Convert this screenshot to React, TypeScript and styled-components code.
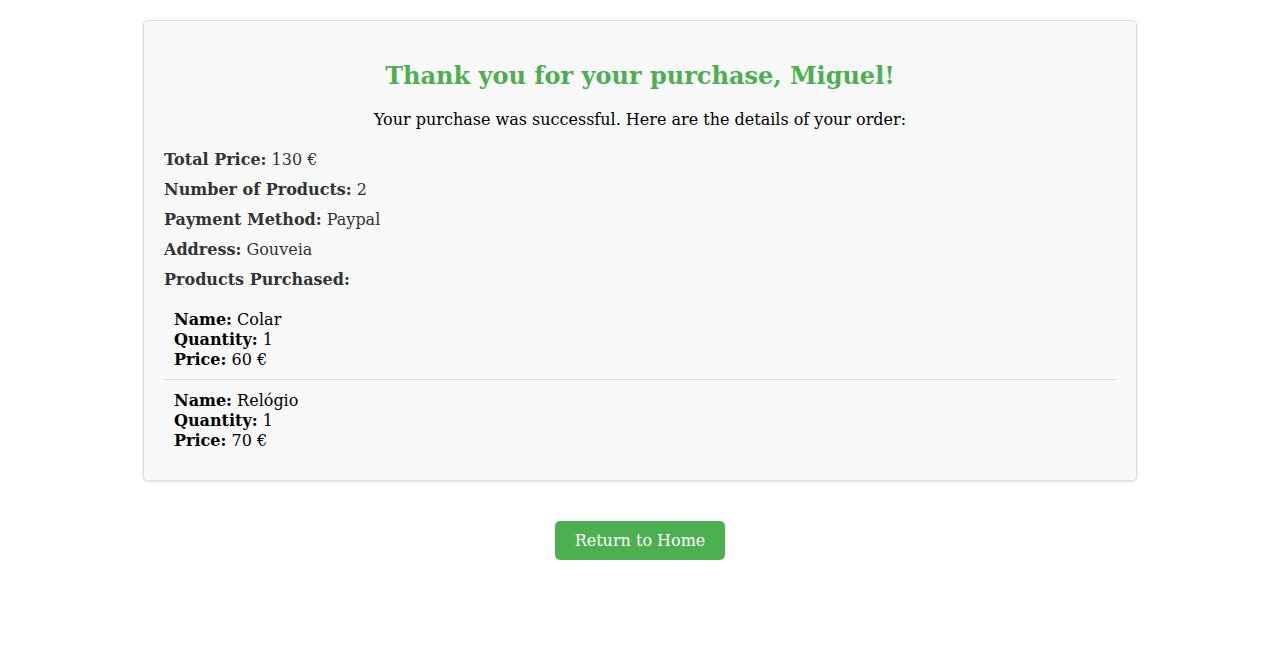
import React from "react";
import styled, { createGlobalStyle } from "styled-components";

const GlobalStyle = createGlobalStyle`
  html, body { margin: 0; padding: 0; background: #ffffff; }
  body { font-family: "DejaVu Serif", serif; font-size: 16px; line-height: 20px; color: #000; }
`;

const Page = styled.main`
  display: flex;
  flex-direction: column;
  align-items: center;
  padding: 20px 0 40px 15px;
`;

const Card = styled.section`
  box-sizing: border-box;
  width: 994px;
  padding: 20px;
  background: #f9f9f9;
  border: 1px solid #dddddd;
  border-radius: 5px;
  box-shadow: 0 1px 3px rgba(0, 0, 0, 0.12);
`;

const Title = styled.h2`
  margin: 21px 0 20px;
  font-size: 24px;
  line-height: 28px;
  font-weight: bold;
  color: #4caf50;
  text-align: center;
`;

const Subtitle = styled.p`
  margin: 0 0 20px;
  text-align: center;
`;

const InfoRow = styled.p`
  margin: 0 0 10px;
  color: #333333;
`;

const ProductList = styled.ul`
  list-style: none;
  margin: 20px 0 0;
  padding: 0;
`;

const ProductItem = styled.li`
  padding: 0 10px 9px;
  border-bottom: 1px solid #dddddd;
  & + & {
    padding-top: 11px;
  }
  &:last-child {
    border-bottom: none;
  }
`;

const Line = styled.div``;

const HomeButton = styled.button`
  margin-top: 40px;
  padding: 10px 20px;
  font-family: "DejaVu Serif", serif;
  font-size: 16px;
  line-height: 19px;
  color: #ffffff;
  background: #4caf50;
  border: none;
  border-radius: 5px;
  cursor: pointer;
`;

const products = [
  { name: "Colar", quantity: 1, price: 60 },
  { name: "Relógio", quantity: 1, price: 70 },
];

const info: [string, string][] = [
  ["Total Price:", "130 €"],
  ["Number of Products:", "2"],
  ["Payment Method:", "Paypal"],
  ["Address:", "Gouveia"],
];

export default function App() {
  return (
    <>
      <GlobalStyle />
      <Page>
        <Card>
          <Title>Thank you for your purchase, Miguel!</Title>
          <Subtitle>Your purchase was successful. Here are the details of your order:</Subtitle>
          {info.map(([label, value]) => (
            <InfoRow key={label}>
              <strong>{label}</strong> {value}
            </InfoRow>
          ))}
          <InfoRow>
            <strong>Products Purchased:</strong>
          </InfoRow>
          <ProductList>
            {products.map((p) => (
              <ProductItem key={p.name}>
                <Line>
                  <strong>Name:</strong> {p.name}
                </Line>
                <Line>
                  <strong>Quantity:</strong> {p.quantity}
                </Line>
                <Line>
                  <strong>Price:</strong> {p.price} €
                </Line>
              </ProductItem>
            ))}
          </ProductList>
        </Card>
        <HomeButton>Return to Home</HomeButton>
      </Page>
    </>
  );
}
